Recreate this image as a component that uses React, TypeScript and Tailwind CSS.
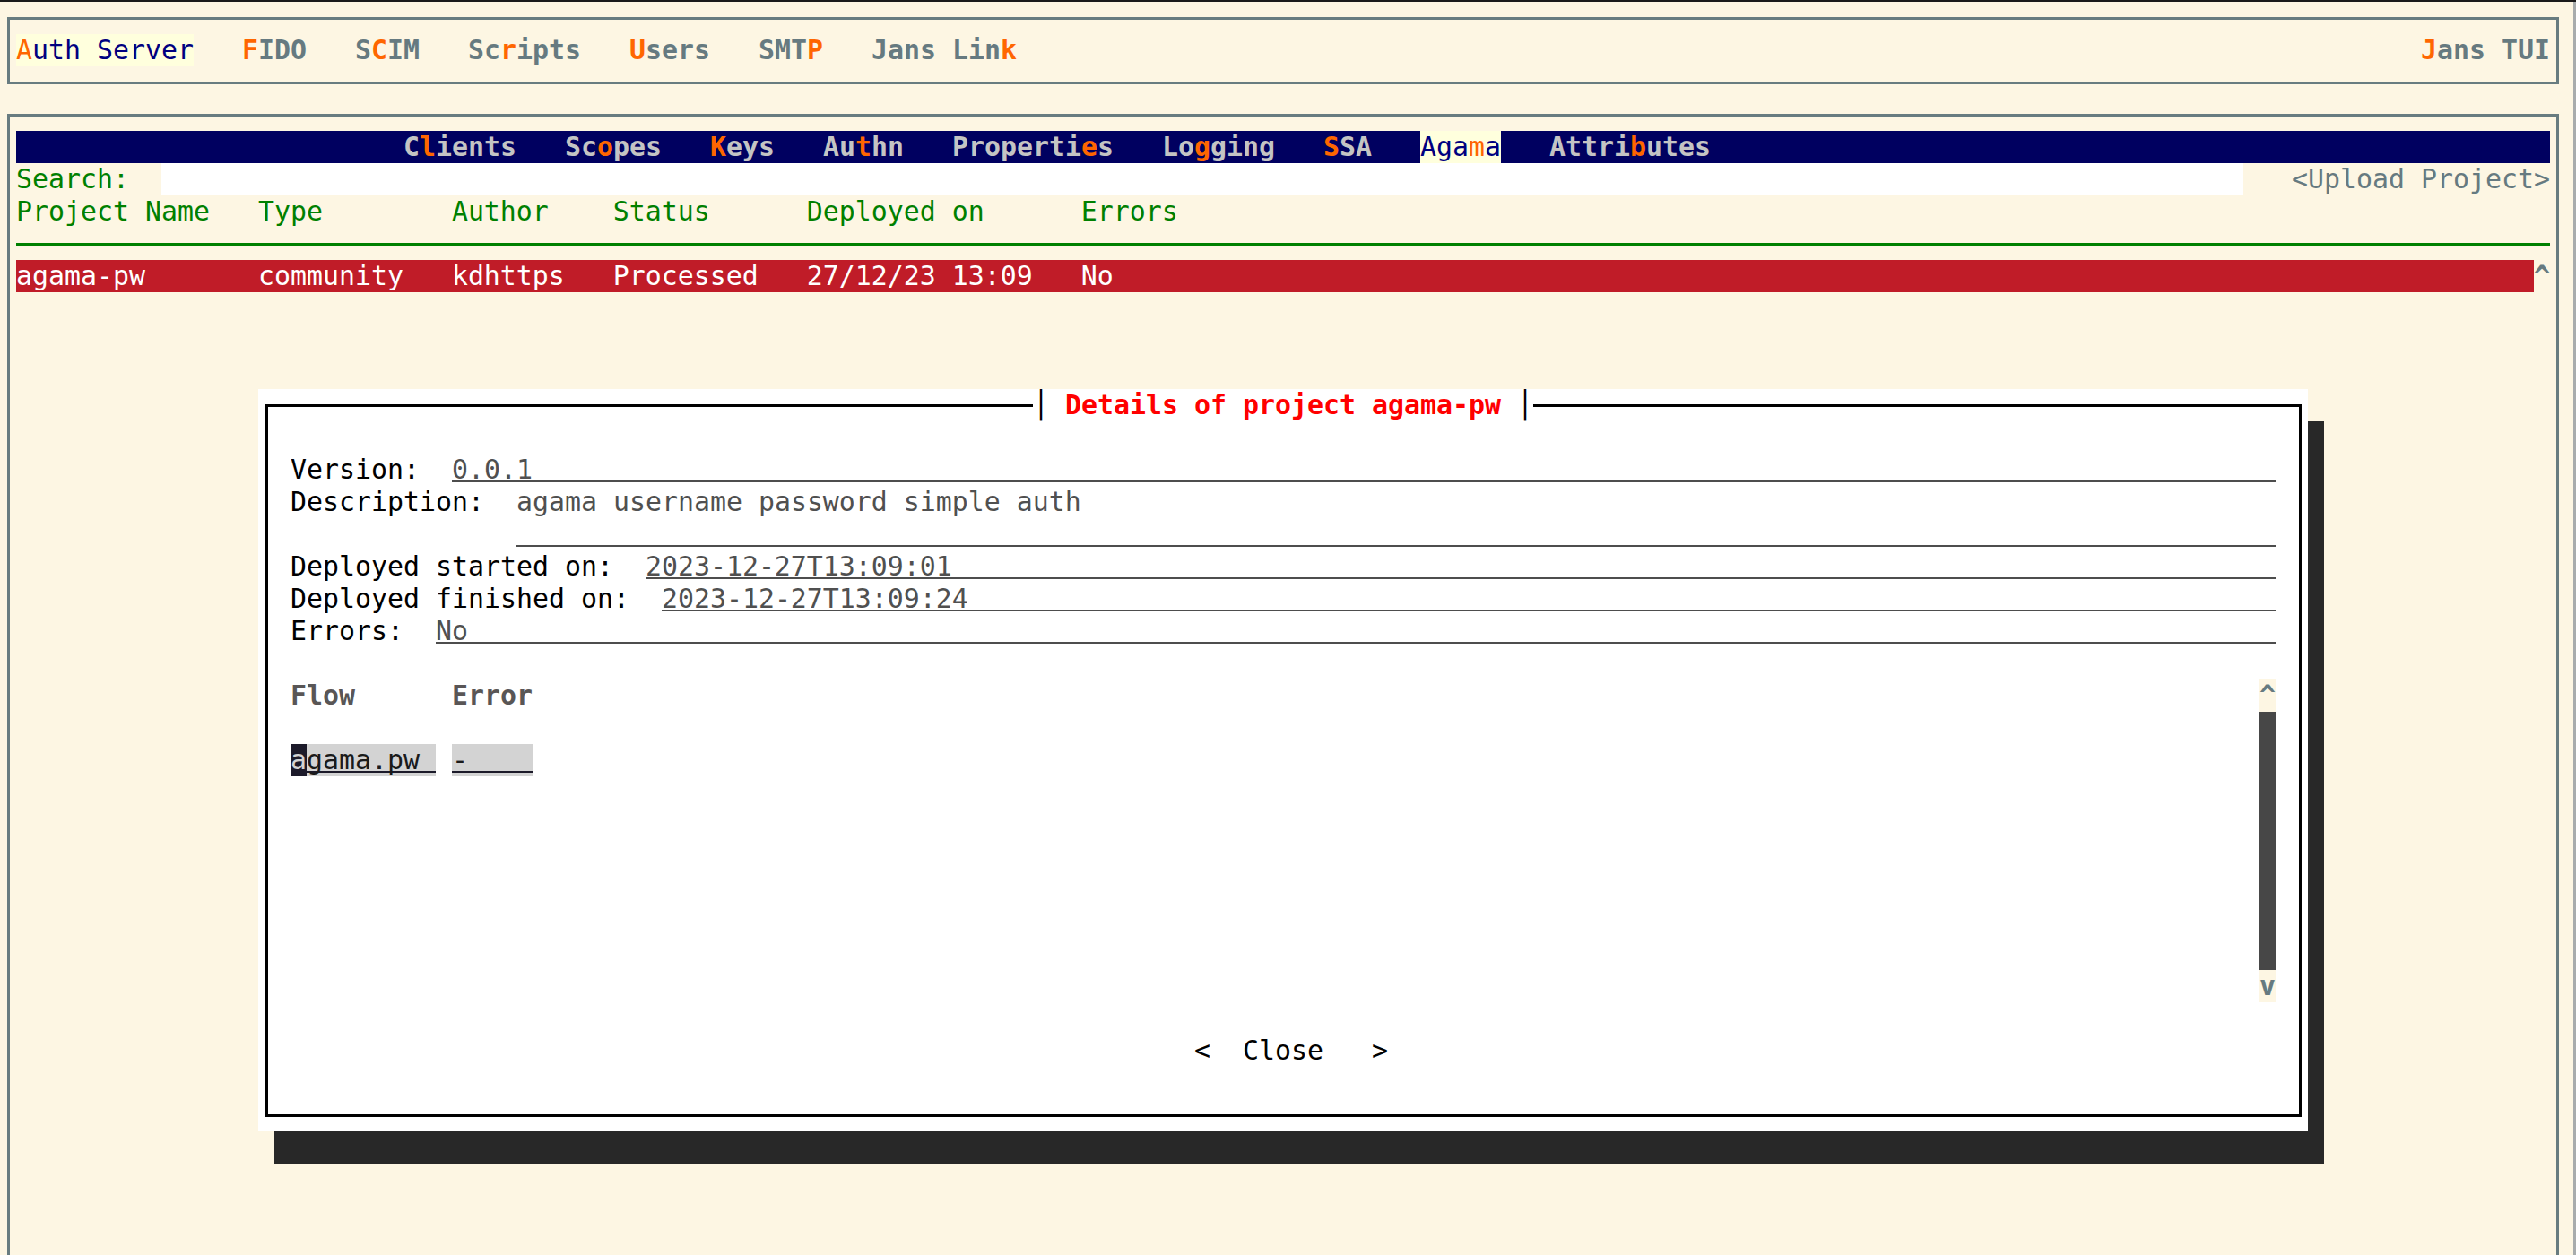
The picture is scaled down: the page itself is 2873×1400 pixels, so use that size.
import React from "react";

interface HotProps {
  text: string;
  at: number;
  className?: string;
  hotClass?: string;
}

// one menu entry with its hotkey letter painted orange
const Hot: React.FC<HotProps> = ({ text, at, className = "", hotClass = "text-[#ff6600]" }) => (
  <span className={className}>
    {text.slice(0, at)}
    <span className={hotClass}>{text[at]}</span>
    {text.slice(at + 1)}
  </span>
);

const topMenu = [
  { text: "FIDO", at: 0 },
  { text: "SCIM", at: 1 },
  { text: "Scripts", at: 2 },
  { text: "Users", at: 0 },
  { text: "SMTP", at: 3 },
  { text: "Jans Link", at: 8 },
];

const tabs = [
  { text: "Clients", at: 1 },
  { text: "Scopes", at: 2 },
  { text: "Keys", at: 0 },
  { text: "Authn", at: 2 },
  { text: "Properties", at: 8 },
  { text: "Logging", at: 2 },
  { text: "SSA", at: 0 },
  { text: "Agama", at: 3, active: true },
  { text: "Attributes", at: 5 },
];

const Row: React.FC<{ className?: string; children?: React.ReactNode }> = ({ className = "", children }) => (
  <div className={`flex h-[36px] ${className}`}>{children}</div>
);

// underlined input-ish field, line sits a few px above the cell bottom
const Field: React.FC<{ value?: string }> = ({ value = "" }) => (
  <div className="flex-1 h-[32px] border-b-2 border-[#4d4d4d] text-[#505050]">{value}</div>
);

export default function App() {
  return (
    <div className="relative w-[2873px] h-[1400px] overflow-hidden bg-[#fdf6e3] border-t-2 border-[#1a1a1a] font-['DejaVu_Sans_Mono','Liberation_Mono',monospace] text-[29.9px] leading-[36px] whitespace-pre text-black">
      {/* top menu box */}
      <div className="mt-[17px] ml-[8px] w-[2846px] h-[75px] border-[3px] border-[#687c80] pt-[16px] px-[7px]">
        <Row className="justify-between">
          <div className="flex gap-[54px]">
            <Hot text="Auth Server" at={0} className="bg-[#ffffdd] text-[#000080]" />
            {topMenu.map((m) => (
              <Hot key={m.text} text={m.text} at={m.at} className="font-bold text-[#667a80]" />
            ))}
          </div>
          <Hot text="Jans TUI" at={0} className="font-bold text-[#667a80]" />
        </Row>
      </div>

      {/* main panel */}
      <div className="mt-[33px] ml-[8px] w-[2846px] h-[1400px] border-[3px] border-[#687c80] pt-[16px] px-[7px]">
        <Row className="bg-[#000060] pl-[432px] gap-[54px]">
          {tabs.map((t) =>
            t.active ? (
              <Hot key={t.text} text={t.text} at={t.at} className="bg-[#ffffdd] text-[#000080]" />
            ) : (
              <Hot key={t.text} text={t.text} at={t.at} className="font-bold text-[#c4c4c4]" />
            )
          )}
        </Row>
        <Row>
          <span className="w-[162px] text-[#008000]">Search:</span>
          <div className="w-[2322px] bg-white" />
          <span className="ml-[54px] text-[#667a80]">{"<Upload Project>"}</span>
        </Row>
        <Row className="text-[#008000]">
          {"Project Name   Type        Author    Status      Deployed on      Errors"}
        </Row>
        <Row className="items-center">
          <div className="w-full h-[3px] bg-[#008000]" />
        </Row>
        <Row>
          <div className="w-[2808px] bg-[#c01c28] text-white">
            {"agama-pw       community   kdhttps   Processed   27/12/23 13:09   No"}
          </div>
          <span className="font-bold text-[#667a80]">^</span>
        </Row>
      </div>

      {/* details dialog */}
      <div className="absolute left-[288px] top-[432px] w-[2286px] h-[828px] bg-white shadow-[18px_36px_0_0_#282828] pl-[8px] pt-[17px]">
        <div className="relative w-[2271px] h-[795px] border-[3px] border-black pt-[16px] pl-[25px]">
          <div className="absolute -top-[20px] left-[853px] h-[36px] bg-white flex">
            <span>{"│ "}</span>
            <span className="font-bold text-[#ff0000]">Details of project agama-pw</span>
            <span>{" │"}</span>
          </div>

          <div className="w-[2214px] flex flex-col">
            <Row />
            <Row>
              <span>{"Version:  "}</span>
              <Field value="0.0.1" />
            </Row>
            <Row>
              <span>{"Description:  "}</span>
              <span className="text-[#505050]">agama username password simple auth</span>
            </Row>
            <Row className="pl-[252px]">
              <Field />
            </Row>
            <Row>
              <span>{"Deployed started on:  "}</span>
              <Field value="2023-12-27T13:09:01" />
            </Row>
            <Row>
              <span>{"Deployed finished on:  "}</span>
              <Field value="2023-12-27T13:09:24" />
            </Row>
            <Row>
              <span>{"Errors:  "}</span>
              <Field value="No" />
            </Row>
            <Row />

            <div className="flex">
              <div className="w-[2196px] flex flex-col">
                <Row className="font-bold text-[#595656]">{"Flow      Error"}</Row>
                <Row />
                <Row>
                  <div className="flex w-[162px] bg-[#d3d3d3]">
                    <span className="w-[18px] h-[36px] bg-[#1c1a2a] text-[#d3d3d3]">a</span>
                    <div className="flex-1 h-[32px] border-b-2 border-[#1c1a2a] text-[#1a1a1a]">gama.pw</div>
                  </div>
                  <div className="ml-[18px] w-[90px] bg-[#d3d3d3]">
                    <div className="h-[32px] border-b-2 border-[#1c1a2a] text-[#1a1a1a]">-</div>
                  </div>
                </Row>
              </div>
              <div className="w-[18px] flex flex-col">
                <div className="h-[36px] bg-[#fdf6e3] font-bold text-[#667a80]">^</div>
                <div className="h-[288px] bg-[#474747]" />
                <div className="h-[36px] bg-[#fdf6e3] font-bold text-[#667a80]">v</div>
              </div>
            </div>

            <Row />
            <Row className="pl-[1008px]">{"<  Close   >"}</Row>
          </div>
        </div>
      </div>

      {/* terminal window edge */}
      <div className="absolute right-0 top-0 w-[3px] h-full bg-[#a8acad]" />
    </div>
  );
}
